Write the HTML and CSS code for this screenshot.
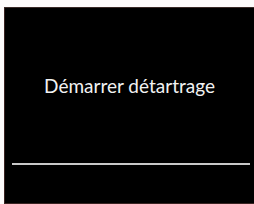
FILE: index.html
```html
<!DOCTYPE html>
<html lang="fr">
<head>
    <meta charset="UTF-8">
    <meta name="viewport" content="width=device-width, initial-scale=1.0">
    <title>Détartrage</title>
    <link rel="stylesheet" href="styles.css">
</head>
<body>
    <div class="screen">
        <p class="message">Démarrer détartrage</p>
        <div class="divider"></div>
    </div>
</body>
</html>
```

FILE: styles.css
```css
body {
    margin: 0;
    background-color: #fdfbfb;
    font-family: Lato, "Open Sans", sans-serif;
}
.screen {
    margin: 7px 0 0 4px;
    height: 195px;
    background-color: #000;
    border-top: 1px solid #3a2a28;
    border-left: 1px solid #3a2422;
    border-bottom: 1px solid #3a2422;
    display: flex;
    flex-direction: column;
}
.message {
    margin: 66px 0 0 0;
    color: #f2f2f2;
    font-size: 19px;
    line-height: 24px;
    text-align: center;
}
.divider {
    margin: 65px 4px 0 7px;
    height: 2px;
    background-color: #c8c8c8;
}
```
